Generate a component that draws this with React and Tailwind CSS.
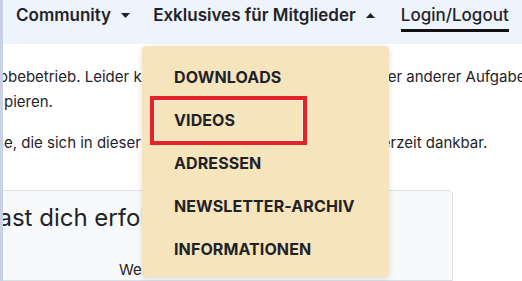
import { useState } from 'react'

const items = ['Downloads', 'Videos', 'Adressen', 'Newsletter-Archiv', 'Informationen']

function Caret({ up }) {
  return (
    <svg width="9" height="5" viewBox="0 0 9 5" className="ml-[10px] mt-[1px] shrink-0">
      {up ? <path d="M0 5 L4.5 0 L9 5 Z" fill="#1f2328" /> : <path d="M0 0 L9 0 L4.5 5 Z" fill="#1f2328" />}
    </svg>
  )
}

export default function App() {
  const [active] = useState('Videos')

  return (
    <div className="relative flex h-[281px] w-[522px] overflow-hidden bg-white text-[#1f2328]" style={{ fontFamily: 'Inter, "Noto Sans", sans-serif' }}>
      <div className="w-[3px] shrink-0 bg-[#c8d2e4]" />

      <div className="relative flex min-w-0 flex-1 flex-col overflow-hidden">
        {/* top navigation */}
        <nav className="flex h-[44px] shrink-0 items-start whitespace-nowrap bg-[#eef4fb] pt-[3px] text-[17px] font-semibold">
          <div className="flex items-center pl-[13px] leading-[24px]">
            Community <Caret />
          </div>
          <div className="ml-[23px] flex items-center leading-[24px]">
            Exklusives für Mitglieder <Caret up />
          </div>
          <div className="ml-[26px] border-b-[3px] border-[#111] pb-[2px] font-medium leading-[24px]">Login/Logout</div>
        </nav>

        {/* page text */}
        <div className="mt-[20px] text-[15px] leading-[25px] whitespace-nowrap">
          <div className="-ml-[19px]">Probebetrieb. Leider kann ich mir nicht immer wegen vieler anderer Aufgaben</div>
          <div className="ml-[1px]">pieren.</div>
          <div className="mt-[16px] -ml-[55px]">Hinweise, die sich in dieser Testphase nun zeigen, bin ich jederzeit dankbar.</div>
        </div>

        {/* card */}
        <div className="mt-[35px] -ml-[20px] w-[470px] flex-1 rounded-tr-[5px] border border-[#dcdfe3] bg-[#f8f9fa]">
          <div className="mt-[12px] -ml-[38px] whitespace-nowrap text-[24px] leading-[30px]">Du hast dich erfolgreich angemeldet</div>
          <div className="mt-[27px] pl-[135px] text-[15px] leading-[20px]">Weiter</div>
        </div>
      </div>

      {/* dropdown */}
      <div className="absolute left-[142px] top-[46px] h-[231px] w-[247px] rounded-[4px] bg-[#f5e4bc] py-[9px] shadow-[0_2px_6px_rgba(0,0,0,0.12)]">
        {items.map((it) => (
          <div key={it} className="flex h-[43px] items-center pl-[32px] text-[16px] font-bold uppercase tracking-[0.1px] text-[#1f2328]">
            {it}
          </div>
        ))}
        {active === 'Videos' && (
          <div className="absolute left-[8px] top-[50px] h-[49px] w-[157px] border-4 border-[#e3222a]">
            <div className="h-full w-full border border-[#fbefd8]" />
          </div>
        )}
      </div>
    </div>
  )
}
